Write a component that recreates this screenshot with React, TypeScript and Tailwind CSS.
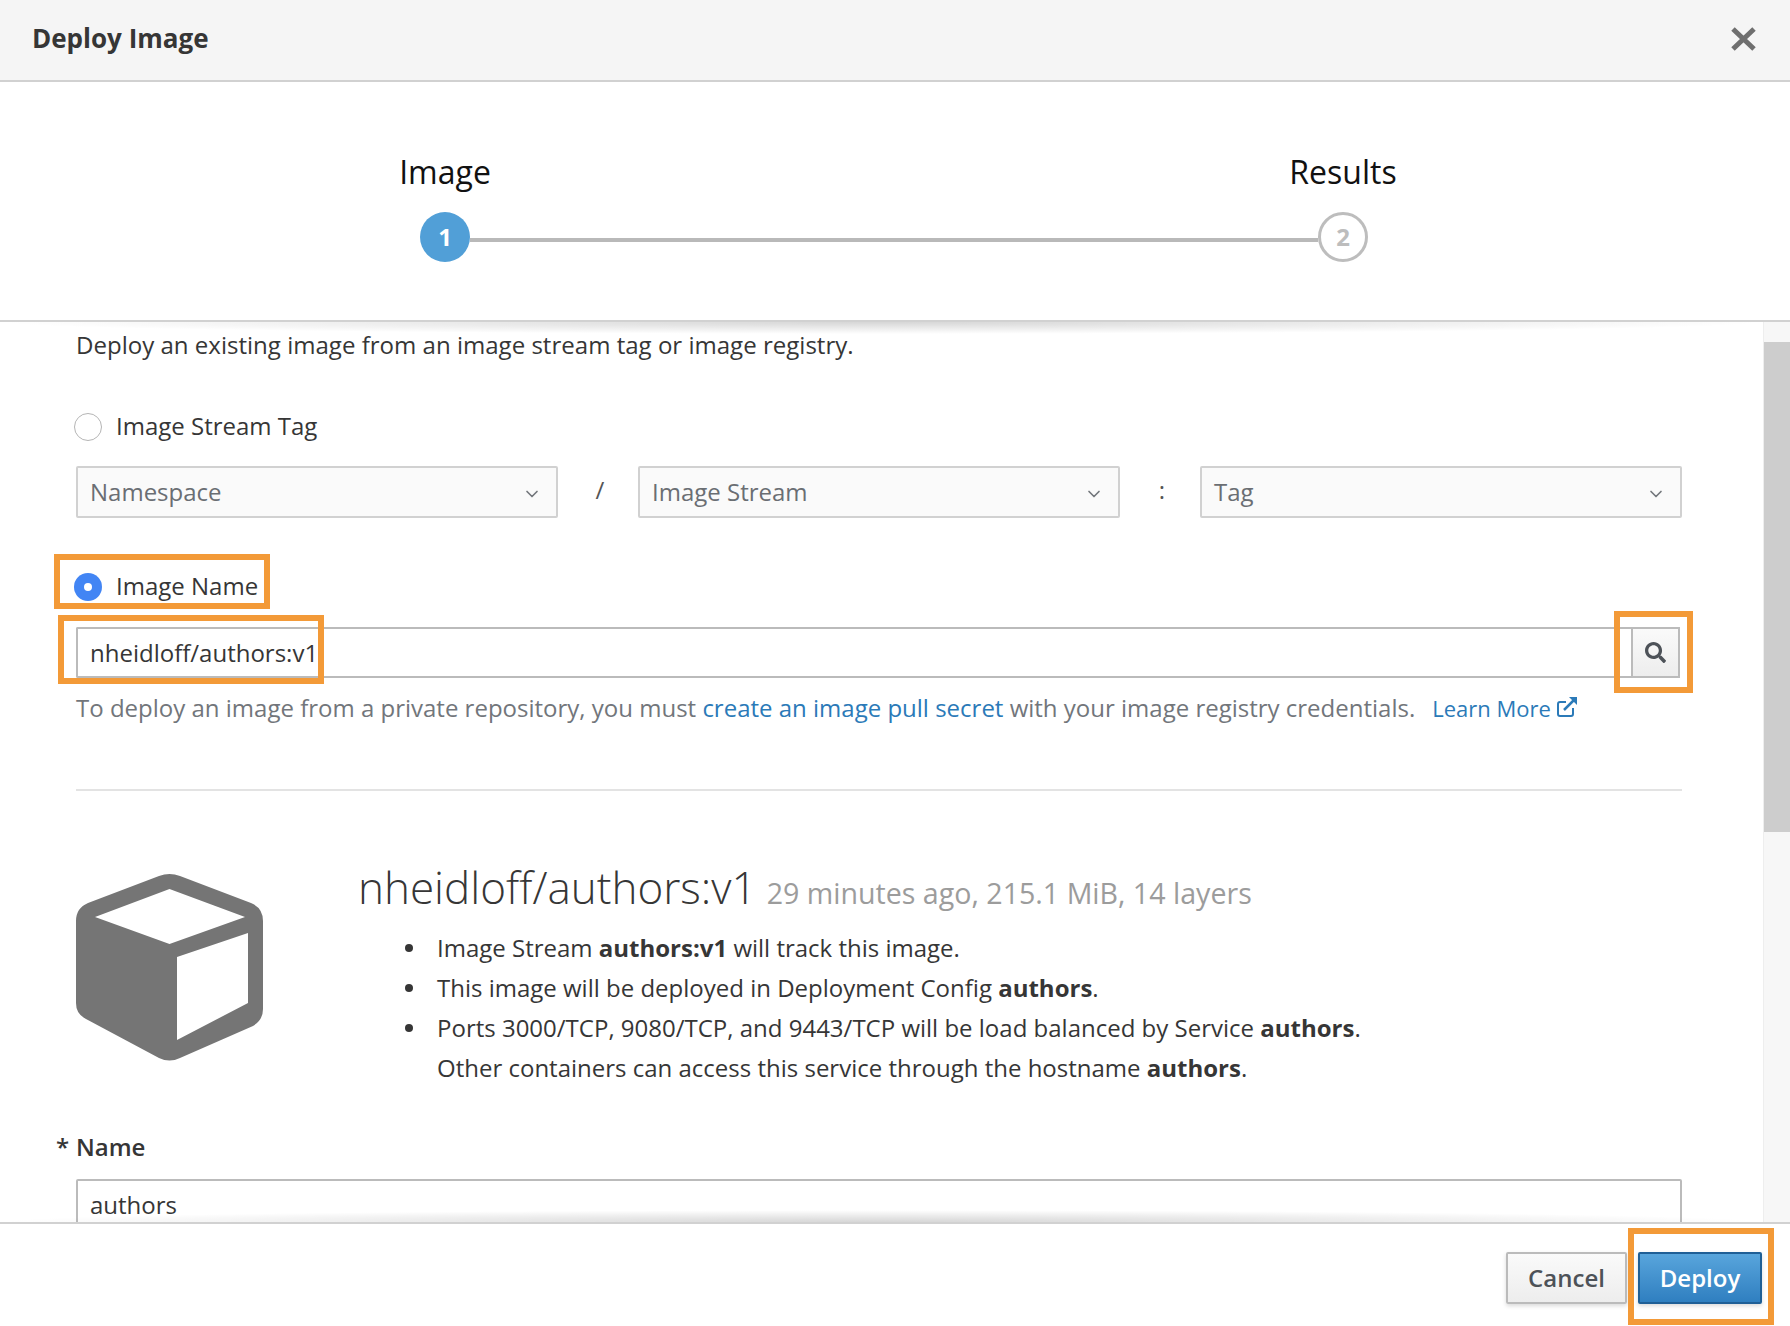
import { ChevronDown } from "lucide-react";
import { FaSearch } from "react-icons/fa";

const callouts = [
  "left-[54px] top-[554px] h-[55px] w-[216px]",
  "left-[58px] top-[615px] h-[69px] w-[266px]",
  "left-[1614px] top-[611px] h-[82px] w-[79px]",
  "left-[1628px] top-[1228px] h-[97px] w-[146px]",
];

function Select({ label }: { label: string }) {
  return (
    <div className="flex h-[52px] w-[482px] items-center justify-between rounded-[2px] border-2 border-[#d1d1d1] bg-[#fafafa] pl-[12px] pr-[14px] text-[#6a6e73]">
      <span>{label}</span>
      <ChevronDown size={20} strokeWidth={2} className="mt-[3px] text-[#72767b]" />
    </div>
  );
}

function Radio({ checked }: { checked?: boolean }) {
  return checked ? (
    <span className="mt-[2px] flex size-[28px] items-center justify-center rounded-full bg-[#4285f4]">
      <span className="size-[8px] rounded-full bg-white" />
    </span>
  ) : (
    <span className="mt-[2px] size-[28px] rounded-full border border-[#b5b5b5] bg-white" />
  );
}

function RadioRow({ checked, label }: { checked?: boolean; label: string }) {
  return (
    <div className="-ml-[2px] flex h-[34px] items-center gap-[14px]">
      <Radio checked={checked} />
      <span>{label}</span>
    </div>
  );
}

function CubeIcon() {
  return (
    <svg viewBox="0 0 187 188" className="mt-[11px] h-[188px] w-[187px] shrink-0">
      <path
        fill="#757575"
        fillRule="evenodd"
        d="M83 3 Q93.500 -1 104 3 L175 30 Q187 35 187 48 L187 136 Q187 147 177 153 L104 185 Q93.500 190 83 185 L10 146 Q0 141 0 130 L0 48 Q0 35 12 30 Z M93.500 16 L19 44 L93.500 71 L169 44 Z M101 84 L101 167 L172 130 L172 60 Z"
      />
    </svg>
  );
}

function Bullet({ children }: { children: React.ReactNode }) {
  return (
    <li className="flex h-[40px] items-center">
      <span className="ml-[47px] mr-[24px] size-[8px] rounded-full bg-[#363636]" />
      <span>{children}</span>
    </li>
  );
}

export default function App() {
  return (
    <div className="relative flex h-[1326px] w-full flex-col overflow-hidden bg-white font-['Open_Sans',sans-serif] text-[24px] text-[#363636]">
      <header className="flex h-[82px] shrink-0 items-center justify-between border-b-2 border-[#d1d1d1] bg-[#f5f5f5] pl-[32px] pr-[33px]">
        <h1 className="mb-[3px] text-[26px] font-bold">Deploy Image</h1>
        <svg viewBox="0 0 27 26" className="mb-[3px] h-[26px] w-[27px]">
          <path d="M3 3 L24 23 M24 3 L3 23" stroke="#6f6f6f" strokeWidth="5" />
        </svg>
      </header>

      <section className="flex h-[240px] shrink-0 flex-col items-center border-b-2 border-[#d1d1d1] pr-[2px] pt-[70px]">
        <div className="flex w-[1098px] justify-between text-[32px] leading-[40px] text-[#111]">
          <span className="w-[200px] text-center">Image</span>
          <span className="w-[200px] text-center">Results</span>
        </div>
        <div className="mt-[20px] flex w-[948px] items-center">
          <span className="flex size-[50px] shrink-0 items-center justify-center rounded-full bg-[#519fd7] text-[24px] font-bold text-white">
            1
          </span>
          <span className="mt-[6px] h-[4px] flex-1 bg-[#b9b9b9]" />
          <span className="flex size-[50px] shrink-0 items-center justify-center rounded-full border-[3px] border-[#bdbdbd] bg-white text-[24px] font-bold text-[#bdbdbd]">
            2
          </span>
        </div>
      </section>

      <div className="relative flex h-[900px] shrink-0 overflow-hidden">
        <main className="min-w-0 flex-1 pl-[76px] pr-[81px]">
          <p className="mt-[6px] h-[34px] text-[24.060px] leading-[34px]">
            Deploy an existing image from an image stream tag or image registry.
          </p>

          <div className="mt-[47px]">
            <RadioRow label="Image Stream Tag" />
          </div>
          <div className="mt-[23px] flex items-center justify-between">
            <Select label="Namespace" />
            <span className="-mt-[4px] w-[80px] pl-[4px] text-center text-[#555]">/</span>
            <Select label="Image Stream" />
            <span className="-mt-[4px] w-[80px] pl-[4px] text-center text-[#555]">:</span>
            <Select label="Tag" />
          </div>

          <div className="mt-[51px]">
            <RadioRow checked label="Image Name" />
          </div>
          <div className="mt-[24px] flex h-[51px] items-stretch pr-[2px]">
            <div className="flex flex-1 items-center rounded-l-[2px] border-2 border-r-0 border-[#bbb] pl-[12px] pt-[1px]">
              nheidloff/authors:v1
            </div>
            <div className="flex w-[49px] items-center justify-center border-2 border-[#bbb] bg-gradient-to-b from-[#fafafa] to-[#ededed]">
              <FaSearch size={21} className="text-[#4d5258]" />
            </div>
          </div>
          <p className="mt-[13px] flex h-[34px] items-center text-[#72767b]">
            <span>
              To deploy an image from a private repository, you must{" "}
              <a className="text-[#2b7ab8]">create an image pull secret</a> with
              your image registry credentials.
            </span>
            <a className="ml-[17px] mt-[1px] flex items-center gap-[5px] text-[22px] text-[#2b7ab8]">
              Learn More
              <svg viewBox="0 0 22 22" className="mb-[4px] size-[22px]" fill="none" stroke="currentColor" strokeWidth="2">
                <path d="M17 12 L17 18 Q17 20 15 20 L4 20 Q2 20 2 18 L2 8 Q2 6 4 6 L10 6" />
                <path d="M8 14 L20 2" strokeWidth="2.500" />
                <path d="M13 1 L21 1 L21 9 Z" fill="currentColor" stroke="none" />
              </svg>
            </a>
          </p>

          <hr className="mt-[64px] h-[2px] border-0 bg-[#e3e3e3]" />

          <div className="mt-[71px] flex items-start gap-[95px]">
            <CubeIcon />
            <div className="min-w-0">
              <div className="flex h-[50px] items-baseline gap-[10px]">
                <span className="text-[44px] font-light leading-[50px]">nheidloff/authors:v1</span>
                <span className="text-[28.600px] text-[#9c9c9c]">29 minutes ago, 215.1 MiB, 14 layers</span>
              </div>
              <ul className="mt-[16px]">
                <Bullet>
                  Image Stream <b className="font-bold">authors:v1</b> will track this image.
                </Bullet>
                <Bullet>
                  This image will be deployed in Deployment Config <b className="font-bold">authors</b>.
                </Bullet>
                <Bullet>
                  Ports 3000/TCP, 9080/TCP, and 9443/TCP will be load balanced by Service{" "}
                  <b className="font-bold">authors</b>.
                </Bullet>
                <li className="ml-[79px] flex h-[40px] items-center">
                  <span>
                    Other containers can access this service through the hostname{" "}
                    <b className="font-bold">authors</b>.
                  </span>
                </li>
              </ul>
            </div>
          </div>

          <label className="-ml-[20px] mt-[42px] flex h-[34px] items-center font-semibold">
            <span className="w-[20px]">*</span>
            Name
          </label>
          <div className="mt-[15px] flex h-[52px] items-center rounded-[2px] border-2 border-[#bbb] pl-[12px]">
            authors
          </div>
        </main>

        <div className="w-[27px] shrink-0 border-l border-[#eee] bg-[#f7f7f7] pt-[20px]">
          <div className="h-[490px] bg-[#cdcdcd]" />
        </div>

        <div className="pointer-events-none absolute left-0 top-0 h-[12px] w-[1763px] bg-[radial-gradient(50%_100%_at_50%_0%,rgba(0,0,0,0.16),rgba(0,0,0,0))]" />
        <div className="pointer-events-none absolute bottom-0 left-0 h-[12px] w-[1763px] bg-[radial-gradient(50%_100%_at_50%_100%,rgba(0,0,0,0.16),rgba(0,0,0,0))]" />
      </div>

      <footer className="flex flex-1 items-start justify-end gap-[11px] border-t-2 border-[#d1d1d1] pr-[28px] pt-[28px]">
        <button className="h-[52px] w-[121px] rounded-[2px] border-2 border-[#bbb] bg-gradient-to-b from-[#fafafa] to-[#ededed] font-semibold text-[#4d5258] shadow-[0_2px_4px_rgba(0,0,0,0.15)]">
          Cancel
        </button>
        <button className="h-[52px] w-[124px] rounded-[2px] border-2 border-[#1f5f96] bg-gradient-to-b from-[#58a5dc] to-[#2f7fc0] font-semibold text-white shadow-[0_2px_4px_rgba(0,0,0,0.15)]">
          Deploy
        </button>
      </footer>

      {callouts.map((position) => (
        <div
          key={position}
          className={`pointer-events-none absolute border-[6px] border-[#f39a38] ${position}`}
        />
      ))}
    </div>
  );
}
